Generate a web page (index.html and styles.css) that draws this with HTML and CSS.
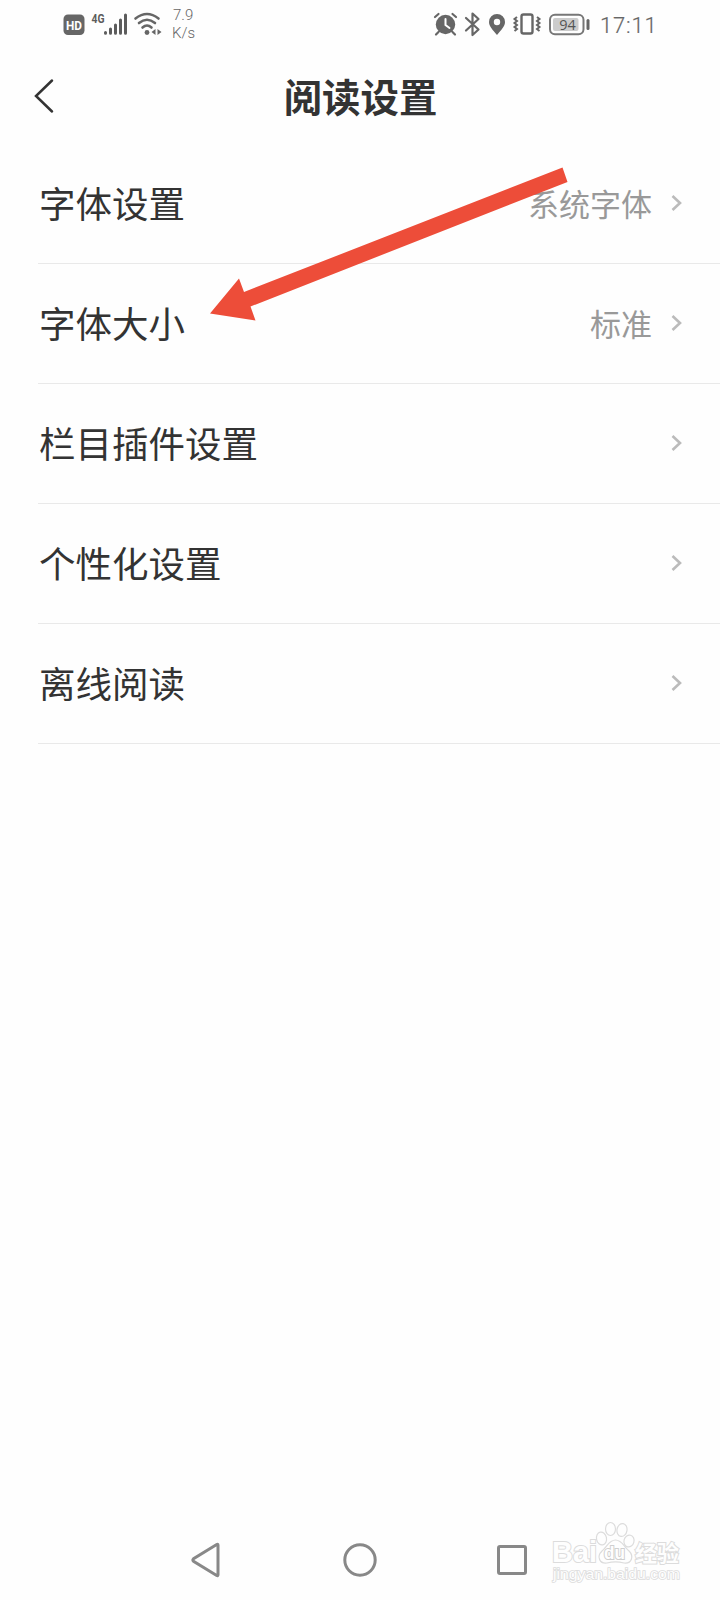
FILE: index.html
```html
<!DOCTYPE html>
<html lang="zh-CN">
<head>
<meta charset="utf-8">
<title>阅读设置</title>
<link rel="stylesheet" href="styles.css">
</head>
<body>
<div class="screen">
  <header class="status">
    <svg class="status-icons" width="102" height="48" viewBox="60 0 102 48">
      <rect x="63.500" y="14.500" width="21" height="20.500" rx="4.500" fill="#666"/>
      <text class="hd" x="74" y="30" text-anchor="middle" textLength="16" lengthAdjust="spacingAndGlyphs">HD</text>
      <text class="net" x="91.500" y="22.500" textLength="13" lengthAdjust="spacingAndGlyphs">4G</text>
      <g stroke="#5c5c5c" stroke-width="3" stroke-linecap="round">
        <path d="M105.500 32.500v.8M110.500 29v4.300M115.500 25v8.300M120.500 20v13.300M125.500 15v18.300"/>
      </g>
      <g fill="none" stroke="#666" stroke-width="2.600" stroke-linecap="round">
        <path d="M135.500 18.500Q147 9.500 158.500 18.500M139 23Q147 16.500 155 23M142.500 27.500Q147 23.500 151.500 27.500"/>
      </g>
      <circle cx="147" cy="32.500" r="2.400" fill="#666"/>
      <path d="M151.500 32l4-3v6zM161.500 32l-4-3v6z" fill="#666"/>
    </svg>
    <div class="speed"><span>7.9</span><span>K/s</span></div>
    <svg class="device-icons" width="162" height="48" viewBox="430 0 162 48">
      <g stroke="#666" fill="none" stroke-linecap="round">
        <circle cx="445.500" cy="24.500" r="9.700" fill="#666" stroke="none"/>
        <path d="M435 17l3.500-3M456 17l-3.500-3M438.500 32l-2.500 2.500M452.500 32l2.500 2.500" stroke-width="2.200"/>
        <path d="M445.500 19v6l4 3" stroke="#fff" stroke-width="2"/>
        <path d="M466 18l12.500 11.500-6 5.500V13.500l6 5.500L466 30.500" stroke-width="2.200" stroke-linejoin="round"/>
      </g>
      <path fill="#666" fill-rule="evenodd" d="M497 35C493 30 489 26.500 489 22a8 8 0 0 1 16 0C505 26.500 501 30 497 35zM497 18.800a3.200 3.200 0 1 0 0 6.400 3.200 3.200 0 0 0 0-6.400z"/>
      <g fill="none" stroke="#666">
        <rect x="521.500" y="14.500" width="11" height="19" rx="2" stroke-width="2.400"/>
        <path d="M517 17l-2.500 2 2.500 2-2.500 2 2.500 2-2.500 2 2.500 2-2.500 2M537 17l2.500 2-2.500 2 2.500 2-2.500 2 2.500 2-2.500 2 2.500 2" stroke-width="2"/>
        <rect x="550" y="14.800" width="33.500" height="19.400" rx="5" stroke-width="2" stroke="#777"/>
      </g>
      <rect x="553" y="18" width="25.500" height="13" rx="2" fill="#ccc"/>
      <rect x="586.500" y="19" width="3" height="11" rx="1.500" fill="#666"/>
      <text class="battery" x="567.500" y="30" text-anchor="middle">94</text>
    </svg>
    <time class="clock">17:11</time>
  </header>

  <nav class="titlebar">
    <svg class="back" width="24" height="40" viewBox="0 0 24 40"><path d="M18 4.500L2 20l16 15.500"/></svg>
    <h1>阅读设置</h1>
  </nav>

  <main class="list">
    <div class="row"><span class="label">字体设置</span><span class="value">系统字体</span><svg class="chevron" width="14" height="18" viewBox="0 0 14 18"><path d="M2.500 2l7.500 7-7.500 7"/></svg></div>
    <div class="row"><span class="label">字体大小</span><span class="value">标准</span><svg class="chevron" width="14" height="18" viewBox="0 0 14 18"><path d="M2.500 2l7.500 7-7.500 7"/></svg></div>
    <div class="row"><span class="label">栏目插件设置</span><svg class="chevron" width="14" height="18" viewBox="0 0 14 18"><path d="M2.500 2l7.500 7-7.500 7"/></svg></div>
    <div class="row"><span class="label">个性化设置</span><svg class="chevron" width="14" height="18" viewBox="0 0 14 18"><path d="M2.500 2l7.500 7-7.500 7"/></svg></div>
    <div class="row"><span class="label">离线阅读</span><svg class="chevron" width="14" height="18" viewBox="0 0 14 18"><path d="M2.500 2l7.500 7-7.500 7"/></svg></div>
  </main>

  <footer class="navbar">
    <svg width="30" height="36" viewBox="0 0 30 36"><path d="M27 3.200V32.800Q27 34.200 25.700 33.500L2.500 19.200Q1.300 18 2.500 16.800L25.700 2.500Q27 1.800 27 3.200z"/></svg>
    <svg width="34" height="34" viewBox="0 0 34 34"><circle cx="17" cy="17" r="15.200"/></svg>
    <svg width="30" height="30" viewBox="0 0 30 30"><rect x="1.500" y="1.500" width="27" height="27" rx="1.500"/></svg>
  </footer>

  <svg class="arrow" width="370" height="170" viewBox="205 160 370 170">
    <path d="M210 313.500L239 278.500 244 292 562.500 167.500 567.500 182 250.500 306.500 255.500 320.500z"/>
  </svg>

  <svg class="watermark" width="140" height="70" viewBox="548 1518 140 70">
    <text class="brand" x="552" y="1562" textLength="45" lengthAdjust="spacingAndGlyphs">Bai</text>
    <path d="M615.500 1540C609 1540 607 1547 602 1551C596 1557 600 1564 607 1563C613 1561.500 618 1561.500 624 1563C632 1564 634 1556 629 1551C624 1547 622 1540 615.500 1540z"/>
    <ellipse cx="601.500" cy="1538.500" rx="5" ry="6.500" transform="rotate(-12 601.500 1538.500)"/>
    <ellipse cx="610.500" cy="1529" rx="5" ry="6.500"/>
    <ellipse cx="622" cy="1530" rx="5" ry="6.500" transform="rotate(10 622 1530)"/>
    <ellipse cx="629" cy="1541" rx="5" ry="6" transform="rotate(15 629 1541)"/>
    <text class="du" x="604" y="1559" textLength="21" lengthAdjust="spacingAndGlyphs">du</text>
    <text class="jy" x="635" y="1561" textLength="44" lengthAdjust="spacingAndGlyphs">经验</text>
    <text class="site" x="553" y="1579" textLength="127" lengthAdjust="spacingAndGlyphs">jingyan.baidu.com</text>
  </svg>
</div>
</body>
</html>
```

FILE: styles.css
```css
* { box-sizing: border-box; }
body {
  margin: 0;
  background: #fefefe;
  color: #333;
  font-family: "Liberation Sans", "Noto Sans CJK SC", sans-serif;
}
.screen {
  position: relative;
  display: flex;
  flex-direction: column;
  width: 720px;
  height: 1600px;
  overflow: hidden;
}
.status {
  display: flex;
  align-items: center;
  height: 48px;
  padding-left: 60px;
  color: #666;
  font-family: Roboto, sans-serif;
}
.hd { font: 700 13px Roboto, sans-serif; fill: #fff; }
.net { font: 700 12px Roboto, sans-serif; fill: #5c5c5c; }
.speed {
  display: flex;
  flex-direction: column;
  width: 34px;
  margin-left: 10px;
  font-size: 15px;
  font-weight: 300;
  line-height: 18px;
}
.speed span:first-child { padding-left: 1px; }
.device-icons { margin-left: 224px; }
.battery { font: 400 14.500px "Open Sans", sans-serif; fill: #555; }
.clock {
  margin: 3px 0 0 8px;
  font-size: 22px;
  font-weight: 300;
  letter-spacing: 0.8px;
  -webkit-text-stroke: 0.2px #666;
}
.titlebar {
  display: grid;
  grid-template-columns: 60px 1fr 60px;
  align-items: center;
  height: 96px;
}
.back {
  margin-left: 34px;
  fill: none;
  stroke: #333;
  stroke-width: 2.5;
  stroke-linecap: round;
}
.titlebar h1 {
  margin: 0 0 2px;
  padding-left: 1px;
  font-family: "Noto Sans CJK SC", sans-serif;
  font-size: 38.4px;
  font-weight: 700;
  line-height: 56px;
  text-align: center;
}
.list { padding-left: 38px; }
.row {
  display: flex;
  align-items: center;
  height: 120px;
  padding: 0 36px 2px 0;
  border-bottom: 1px solid #e9e9e9;
}
.label, .value { font-family: "Noto Sans CJK SC", sans-serif; line-height: 54px; }
.label { flex: 1; font-size: 36.5px; padding-left: 1px; }
.value { font-size: 31px; color: #999; margin-right: 18px; }
.chevron { fill: none; stroke: #bbb; stroke-width: 2.6; }
.navbar {
  display: flex;
  align-items: center;
  height: 80px;
  margin-top: auto;
  padding-left: 191px;
  fill: none;
  stroke: #888;
  stroke-width: 3;
}
.navbar svg:nth-child(2) { margin-left: 122px; }
.navbar svg:nth-child(3) { margin-left: 120px; }
.arrow {
  position: absolute;
  left: 205px;
  top: 160px;
  fill: #ed4d39;
}
.watermark {
  position: absolute;
  left: 548px;
  top: 1518px;
  fill: #fefefe;
  stroke: #dcdcdc;
  stroke-width: 1.2;
}
.watermark text { paint-order: stroke; stroke-width: 2; }
.brand { font: 700 30px "Liberation Sans", sans-serif; }
.watermark .du { font: 700 18px "Liberation Sans", sans-serif; stroke: #cfcfcf; }
.jy { font: 700 22px "Noto Sans CJK SC", sans-serif; }
.watermark .site { font: 400 15px "Liberation Sans", sans-serif; stroke-width: 1.6; }
```
